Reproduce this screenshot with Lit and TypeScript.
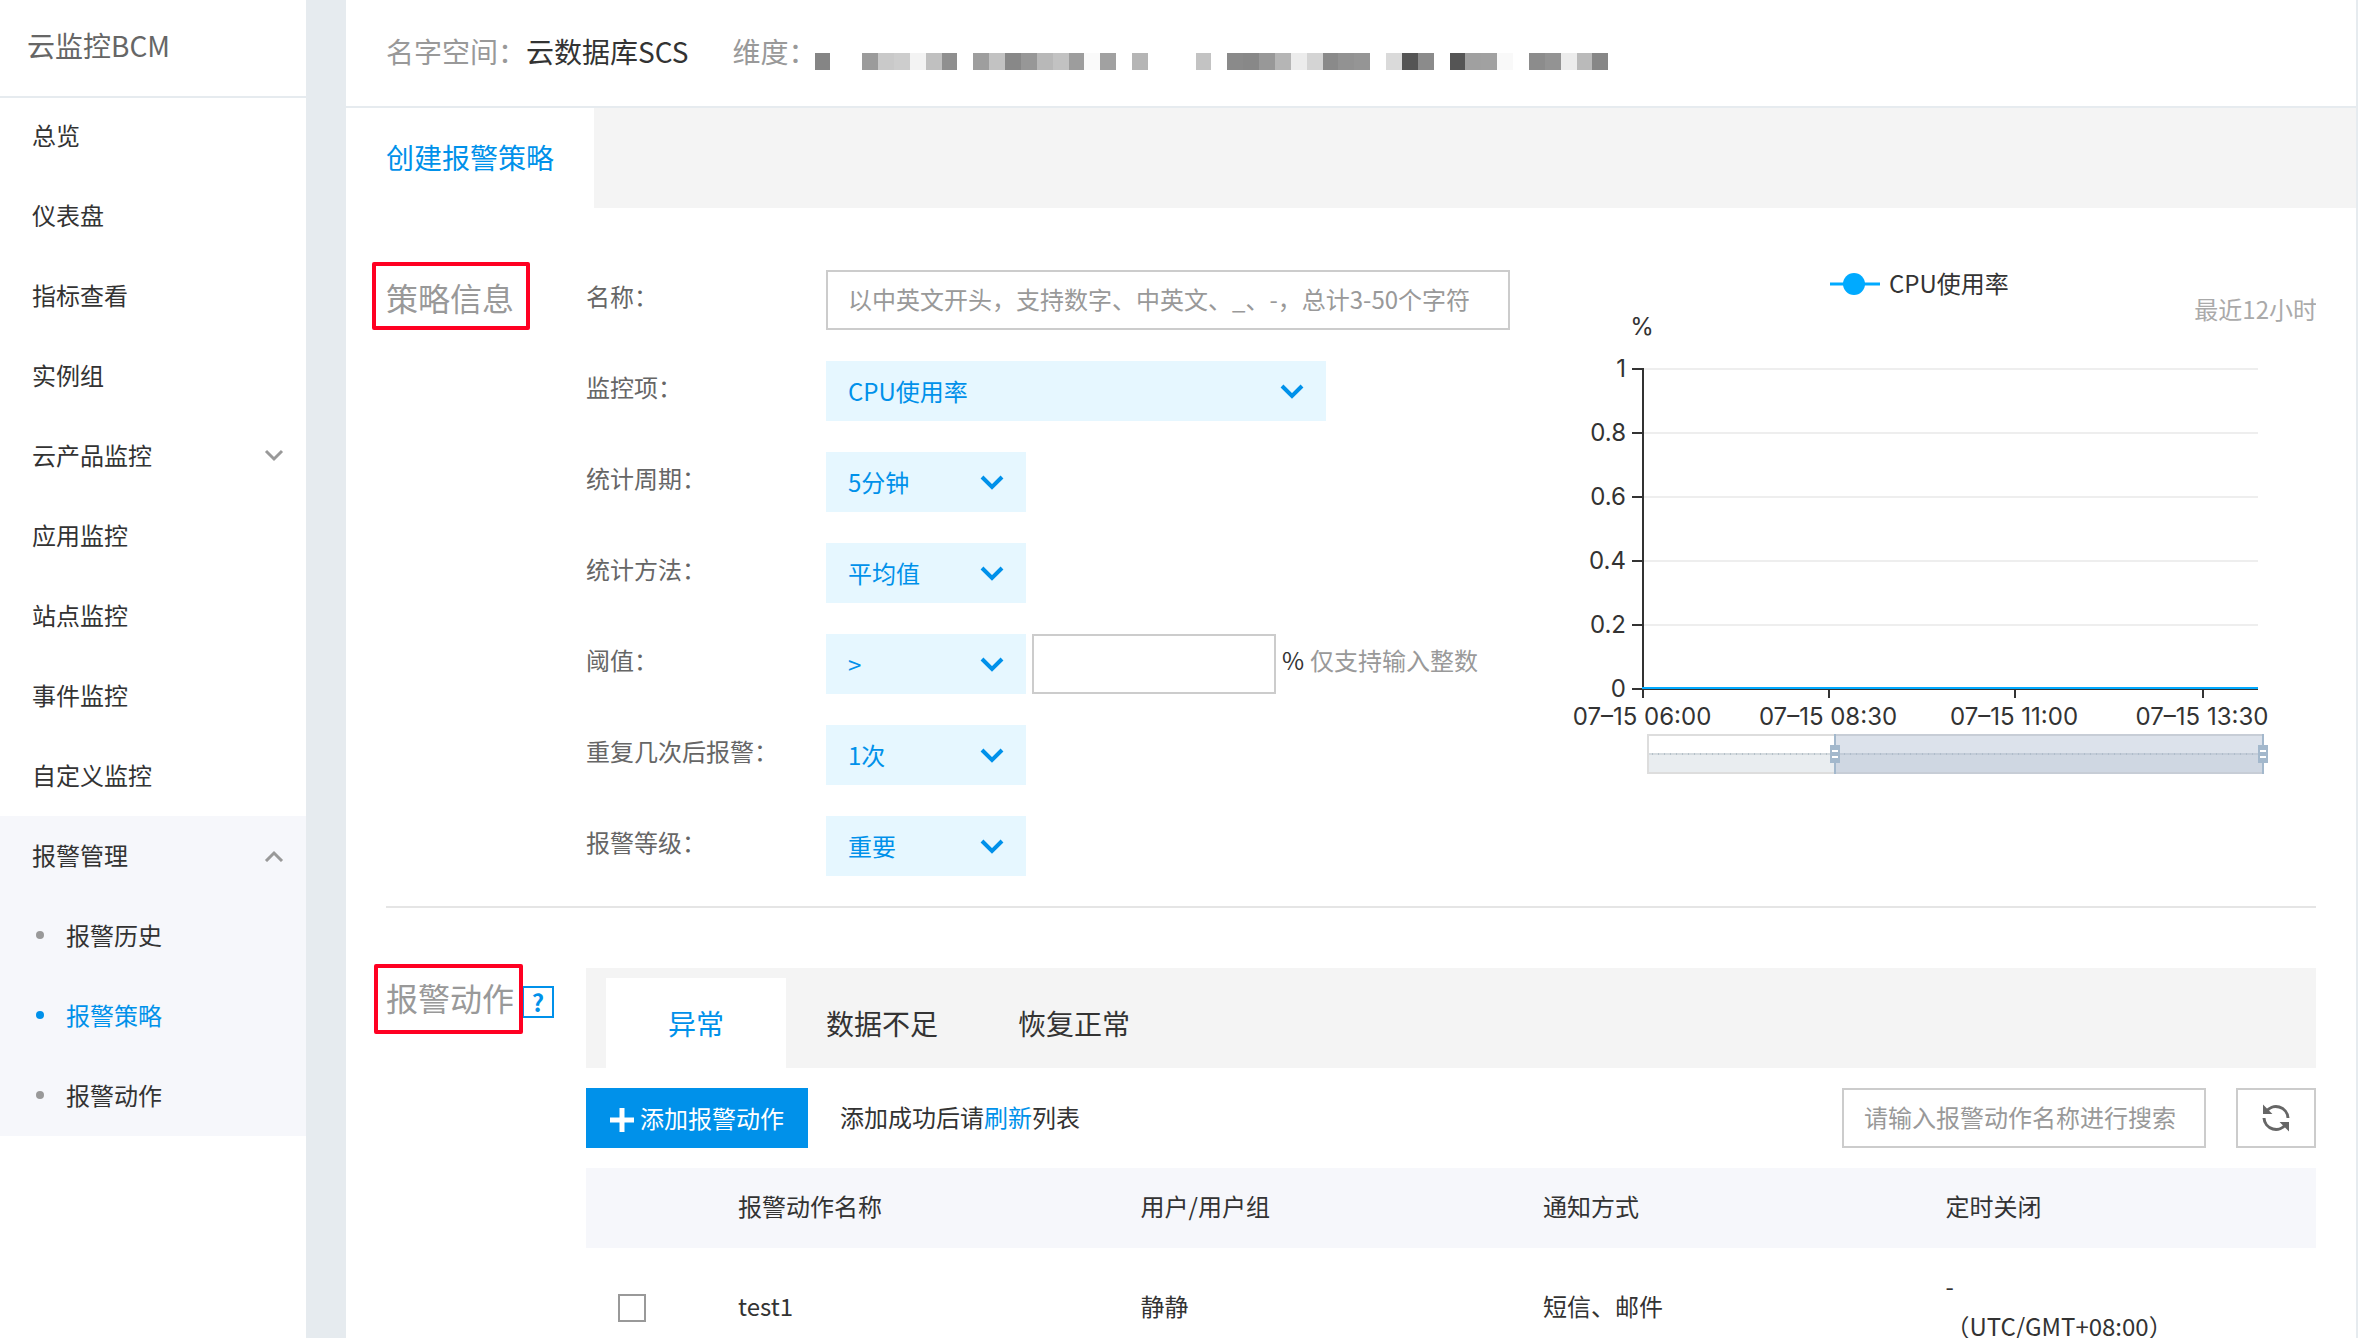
import { LitElement, html, svg, css, nothing } from "lit";
import { customElement, property, state } from "lit/decorators.js";
import { classMap } from "lit/directives/class-map.js";
import { styleMap } from "lit/directives/style-map.js";

interface NavItem {
  label: string;
  expandable?: boolean;
  children?: { label: string; active?: boolean }[];
}

const NAV: NavItem[] = [
  { label: "总览" },
  { label: "仪表盘" },
  { label: "指标查看" },
  { label: "实例组" },
  { label: "云产品监控", expandable: true },
  { label: "应用监控" },
  { label: "站点监控" },
  { label: "事件监控" },
  { label: "自定义监控" },
  {
    label: "报警管理",
    expandable: true,
    children: [{ label: "报警历史" }, { label: "报警策略", active: true }, { label: "报警动作" }],
  },
];

@customElement("side-nav")
export class SideNav extends LitElement {
  static styles = css`
    :host {
      display: block;
      background: #fff;
      color: #333;
    }
    .title {
      height: 96px;
      margin: 0;
      padding: 0 27px;
      border-bottom: 2px solid #e6ebef;
      font-size: 28px;
      line-height: 90px;
      font-weight: 400;
      color: #666;
    }
    .list {
      margin: -2px 0 0;
      padding: 0;
      list-style: none;
    }
    .open {
      background: #f6f7fb;
    }
    .link {
      display: flex;
      box-sizing: border-box;
      align-items: center;
      justify-content: space-between;
      height: 80px;
      padding: 0 22px 3px 32px;
      font-size: 24px;
      color: inherit;
      text-decoration: none;
    }
    .sub {
      margin: 0;
      padding: 0;
      list-style: none;
    }
    .sub .link {
      justify-content: flex-start;
      gap: 22px;
      padding-left: 36px;
    }
    .dot {
      width: 8px;
      height: 8px;
      border-radius: 50%;
      background: #999;
    }
    .active {
      color: #0091ea;
    }
    .active .dot {
      background: #0091ea;
    }
    .arrow {
      display: block;
    }
  `;

  private arrow(up: boolean) {
    return html`<svg class="arrow" width="20" height="14" viewBox="0 0 20 14" aria-hidden="true">
      <path d=${up ? "M2 13L10 5L18 13" : "M2 3L10 11L18 3"} fill="none" stroke="#999" stroke-width="3" />
    </svg>`;
  }

  render() {
    return html`
      <h1 class="title">云监控BCM</h1>
      <ul class="list">
        ${NAV.map(
          (item) => html`<li class=${classMap({ open: !!item.children })}>
            <a class="link" href="#">${item.label}${item.expandable ? this.arrow(!!item.children) : nothing}</a>
            ${item.children
              ? html`<ul class="sub">
                  ${item.children.map(
                    (c) => html`<li>
                      <a class=${classMap({ link: true, active: !!c.active })} href="#"
                        ><span class="dot"></span>${c.label}</a
                      >
                    </li>`
                  )}
                </ul>`
              : nothing}
          </li>`
        )}
      </ul>
    `;
  }
}

/* Grey level of each masked cell; an empty entry leaves a gap. */
const MASK: (string | null)[] = [
  "#858585", null, null, "#9b9b9b", "#c9c9c9", "#cdcdcd", "#f3f3f3", "#c0c0c0", "#8f8f8f", null,
  "#9e9e9e", "#c2c2c2", "#888888", "#979797", "#b8b8b8", "#c2c2c2", "#9d9d9d", "#fafafa", "#a1a1a1", null,
  "#b5b5b5", null, null, null, "#c3c3c3", null, "#8a8a8a", "#888888", "#989898", "#b5b5b5",
  "#ececec", "#d4d4d4", "#8a8a8a", "#929292", "#959595", null, "#dadada", "#555555", "#8b8b8b", null,
  "#555555", "#a0a0a0", "#a1a1a1", "#f9f9f9", null, "#8c8c8c", "#939393", "#ececec", "#bababa", "#878787",
];

@customElement("masked-value")
export class MaskedValue extends LitElement {
  static styles = css`
    :host {
      display: flex;
      width: 794px;
    }
    .cell {
      flex: 1;
      height: 17px;
    }
  `;
  render() {
    return MASK.map((c) => html`<span class="cell" style=${styleMap({ background: c ?? "transparent" })}></span>`);
  }
}

@customElement("field-select")
export class FieldSelect extends LitElement {
  static styles = css`
    :host {
      display: grid;
      width: 200px;
      height: 60px;
      align-items: center;
    }
    :host([wide]) {
      width: 500px;
    }
    .select {
      grid-area: 1 / 1;
      width: 100%;
      height: 60px;
      padding: 0 60px 2px 22px;
      border: 0;
      border-radius: 0;
      appearance: none;
      background: #e6f7ff;
      color: #0091ea;
      font: inherit;
      font-size: 24px;
    }
    .arrow {
      grid-area: 1 / 1;
      justify-self: end;
      margin-right: 22px;
      pointer-events: none;
    }
  `;
  @property() label = "";
  @property() value = "";
  render() {
    return html`
      <select class="select" aria-label=${this.label}>
        <option>${this.value}</option>
      </select>
      <svg class="arrow" width="24" height="16" viewBox="0 0 24 16" aria-hidden="true">
        <path d="M2 3L12 13L22 3" fill="none" stroke="#0091ea" stroke-width="4" />
      </svg>
    `;
  }
}

const Y_TICKS = ["1", "0.8", "0.6", "0.4", "0.2", "0"];
const X_TICKS: [number, string][] = [
  [83, "07–15 06:00"],
  [269, "07–15 08:30"],
  [455, "07–15 11:00"],
  [643, "07–15 13:30"],
];

@customElement("usage-chart")
export class UsageChart extends LitElement {
  static styles = css`
    :host {
      display: block;
    }
    .chart {
      display: block;
    }
    .text {
      font-family: Inter, "Noto Sans CJK SC", sans-serif;
      font-size: 24px;
      fill: #333;
    }
    .muted {
      fill: #aaa;
    }
    .end {
      text-anchor: end;
    }
    .mid {
      text-anchor: middle;
    }
    .cjk {
      font-family: "Noto Sans CJK SC", sans-serif;
    }
  `;
  private handle(x: number) {
    return svg`
      <rect x=${x} y="486" width="2" height="40" fill="#a3b8cc" />
      <rect x=${x - 4} y="497" width="10" height="18" fill="#a3b8cc" />
      <rect x=${x - 2} y="502" width="6" height="2" fill="#fff" />
      <rect x=${x - 2} y="508" width="6" height="2" fill="#fff" />`;
  }
  render() {
    return html`<svg class="chart" width="756" height="540" viewBox="0 0 756 540" role="img" aria-label="CPU使用率">
      <path d="M270 36H320" stroke="#00aaff" stroke-width="3" />
      <circle cx="294" cy="36" r="11" fill="#00aaff" />
      <text class="text cjk" x="329" y="45">CPU使用率</text>
      <text class="text cjk muted end" x="757" y="71">最近12小时</text>
      <text class="text mid" x="82" y="87">%</text>
      ${Y_TICKS.map((t, i) => {
        const y = 121 + i * 64;
        return svg`
          ${i < 5 ? svg`<path d=${`M84 ${y}H698`} stroke="#eee" stroke-width="2" />` : nothing}
          <path d=${`M72 ${y}H83`} stroke="#333" stroke-width="2" />
          <text class="text end" x="66" y=${y + 8}>${t}</text>`;
      })}
      <path d="M83 120V441" stroke="#333" stroke-width="2" />
      <path d="M83 441H698" stroke="#333" stroke-width="2" />
      ${X_TICKS.map(
        ([x, t]) => svg`
          <path d=${`M${x} 441V450`} stroke="#333" stroke-width="2" />
          <text class="text mid" x=${x - 1} y="477">${t}</text>`
      )}
      <path d="M82 440H698" stroke="#00aaff" stroke-width="2" />
      <rect x="88" y="487" width="615" height="38" fill="#fff" stroke="#ddd" stroke-width="2" />
      <rect x="89" y="506" width="613" height="18" fill="#e9edf0" />
      <path d="M89 506H702" stroke="#d5dbdf" stroke-width="2" />
      <path d="M92 506H702" stroke="#b4c0c8" stroke-width="2" stroke-dasharray="1 5" />
      <rect x="275" y="486" width="428" height="40" fill="#a7b7cc" fill-opacity="0.4" />
      ${this.handle(274)} ${this.handle(702)}
    </svg>`;
  }
}

@customElement("app-root")
export class AppRoot extends LitElement {
  static styles = css`
    :host {
      display: grid;
      grid-template-columns: 306px minmax(0, 1fr);
      column-gap: 40px;
      height: 100vh;
      overflow: hidden;
      background: #e6ebef;
      color: #333;
      font-family: "Noto Sans CJK SC", sans-serif;
      font-size: 24px;
    }
    * {
      box-sizing: border-box;
    }
    .main {
      margin-right: 2px;
      overflow-y: auto;
      scrollbar-width: none;
      background: #fff;
    }
    .crumbs {
      display: flex;
      align-items: center;
      height: 108px;
      padding: 0 40px 4px;
      border-bottom: 2px solid #e6ebef;
      font-size: 28px;
      line-height: 40px;
    }
    .key {
      color: #999;
    }
    .value {
      margin-right: 44px;
    }
    .mask {
      margin: 20px 0 0 -2px;
    }
    .page-tabs {
      display: flex;
      height: 100px;
      background: #f4f4f4;
    }
    .page-tab {
      padding: 0 40px;
      width: 248px;
      background: #fff;
      color: #0091ea;
      font-size: 28px;
      line-height: 98px;
      text-decoration: none;
      white-space: nowrap;
    }
    .section {
      display: grid;
      grid-template-columns: 200px minmax(0, 1fr) auto;
      margin: 0 40px;
    }
    .policy {
      padding: 40px 0 30px;
      border-bottom: 2px solid #e5e5e5;
    }
    .actions {
      grid-template-columns: 200px minmax(0, 1fr);
      padding-top: 60px;
    }
    .head {
      display: flex;
      align-items: flex-start;
    }
    .policy .head {
      padding-top: 25px;
    }
    .heading {
      position: relative;
      margin: 0;
      font-size: 32px;
      line-height: 48px;
      font-weight: 400;
      color: #999;
    }
    .actions .heading {
      margin-top: 5px;
    }
    .frame {
      position: absolute;
      inset: -11px -16px -9px -14px;
      border: 4px solid #ff0022;
      border-radius: 2px;
    }
    .actions .frame {
      inset: -9px -9px -13px -12px;
    }
    .help {
      width: 32px;
      height: 32px;
      margin: 18px 0 0 8px;
      padding: 0;
      border: 2px solid #0091ea;
      background: #fff;
      color: #0091ea;
      font: inherit;
      font-size: 24px;
      font-weight: 700;
      line-height: 28px;
    }
    .form {
      display: grid;
      gap: 31px;
      align-content: start;
      padding-top: 22px;
    }
    .row {
      display: grid;
      grid-template-columns: 240px minmax(0, 1fr);
      height: 60px;
    }
    .label,
    .unit,
    .hint {
      line-height: 52px;
    }
    .label {
      color: #666;
    }
    .controls {
      display: flex;
      gap: 6px;
    }
    .hint {
      color: #999;
    }
    .input {
      width: 244px;
      height: 60px;
      padding: 0 20px 3px;
      border: 2px solid #ccc;
      border-radius: 0;
      background: #fff;
      font: inherit;
      color: #333;
    }
    .input::placeholder {
      color: #999;
      opacity: 1;
    }
    .name {
      width: 684px;
    }
    .search {
      width: 364px;
      margin-left: auto;
    }
    .state-tabs {
      display: flex;
      height: 100px;
      padding: 10px 20px 0;
      background: #f4f4f4;
    }
    .state-tab {
      height: 90px;
      padding: 0 40px;
      border: 0;
      background: none;
      color: #333;
      font: inherit;
      font-size: 28px;
    }
    .selected {
      padding: 0 62px;
      background: #fff;
      color: #0091ea;
    }
    .toolbar {
      display: flex;
      height: 60px;
      margin: 20px 0;
      line-height: 58px;
    }
    .add {
      display: flex;
      align-items: center;
      gap: 6px;
      width: 222px;
      padding: 0 24px;
      border: 0;
      background: #0091ea;
      color: #fff;
      font: inherit;
      white-space: nowrap;
    }
    .plus {
      flex: none;
      margin-top: 4px;
    }
    .tip {
      margin-left: 32px;
    }
    .link {
      color: #0091ea;
      text-decoration: none;
    }
    .refresh {
      display: grid;
      place-items: center;
      width: 80px;
      margin-left: 30px;
      padding: 0;
      border: 2px solid #ccc;
      background: #fff;
    }
    .table {
      width: 100%;
      table-layout: fixed;
      border-collapse: collapse;
      line-height: 40px;
    }
    .th,
    .td {
      padding: 18px 32px 22px;
      text-align: left;
      font-weight: 400;
    }
    .th {
      background: #f6f7fb;
    }
    .pick {
      width: 120px;
    }
    .td.pick {
      padding: 20px 32px;
    }
    .check {
      display: block;
      width: 28px;
      height: 28px;
      margin: 0;
      appearance: none;
      border: 2px solid #999;
      background: #fff;
    }
  `;

  @state() private tab = "异常";

  private selectRow(label: string, value: string, wide = false) {
    return html`<div class="row">
      <span class="label">${label}：</span>
      <div class="controls"><field-select label=${label} value=${value} ?wide=${wide}></field-select></div>
    </div>`;
  }

  render() {
    return html`
      <side-nav></side-nav>
      <main class="main">
        <div class="crumbs">
          <span class="key">名字空间：</span><span class="value">云数据库SCS</span> <span class="key">维度：</span
          ><masked-value class="mask"></masked-value>
        </div>
        <nav class="page-tabs"><a class="page-tab" href="#">创建报警策略</a></nav>

        <section class="section policy">
          <div class="head"><h2 class="heading">策略信息<span class="frame"></span></h2></div>
          <form class="form">
            <div class="row">
              <label class="label" for="name">名称：</label>
              <input
                class="input name"
                id="name"
                type="text"
                placeholder="以中英文开头，支持数字、中英文、_、-，总计3-50个字符"
              />
            </div>
            ${this.selectRow("监控项", "CPU使用率", true)} ${this.selectRow("统计周期", "5分钟")}
            ${this.selectRow("统计方法", "平均值")}
            <div class="row">
              <label class="label" for="threshold">阈值：</label>
              <div class="controls">
                <field-select label="比较" value="&gt;"></field-select>
                <input class="input" id="threshold" type="text" />
                <span class="unit">%</span><span class="hint">仅支持输入整数</span>
              </div>
            </div>
            ${this.selectRow("重复几次后报警", "1次")} ${this.selectRow("报警等级", "重要")}
          </form>
          <usage-chart></usage-chart>
        </section>

        <section class="section actions">
          <div class="head">
            <h2 class="heading">报警动作<span class="frame"></span></h2>
            <button class="help" type="button">?</button>
          </div>
          <div>
            <div class="state-tabs" role="tablist">
              ${["异常", "数据不足", "恢复正常"].map(
                (t) => html`<button
                  class=${classMap({ "state-tab": true, selected: t === this.tab })}
                  role="tab"
                  aria-selected=${t === this.tab}
                  @click=${() => (this.tab = t)}
                >
                  ${t}
                </button>`
              )}
            </div>
            <div class="toolbar">
              <button class="add" type="button">
                <svg class="plus" width="24" height="24" viewBox="0 0 24 24" aria-hidden="true">
                  <path d="M12 0V24M0 12H24" stroke="#fff" stroke-width="5" /></svg
                >添加报警动作
              </button>
              <span class="tip">添加成功后请<a class="link" href="#">刷新</a>列表</span>
              <input
                class="input search"
                type="text"
                aria-label="搜索报警动作"
                placeholder="请输入报警动作名称进行搜索"
              />
              <button class="refresh" type="button" aria-label="刷新">
                <svg width="28" height="28" viewBox="0 0 28 28" fill="none" stroke="#666" stroke-width="3">
                  <path d="M26 14A12 12 0 0 0 4 8" />
                  <path d="M2 3V9L8 9Z" fill="#666" stroke-width="2" />
                  <path d="M2 14A12 12 0 0 0 24 20" />
                  <path d="M26 25V19L20 19Z" fill="#666" stroke-width="2" />
                </svg>
              </button>
            </div>
            <table class="table">
              <thead>
                <tr>
                  <th class="th pick"></th>
                  <th class="th">报警动作名称</th>
                  <th class="th">用户/用户组</th>
                  <th class="th">通知方式</th>
                  <th class="th">定时关闭</th>
                </tr>
              </thead>
              <tbody>
                <tr>
                  <td class="td pick"><input class="check" type="checkbox" aria-label="test1" /></td>
                  <td class="td">test1</td>
                  <td class="td">静静</td>
                  <td class="td">短信、邮件</td>
                  <td class="td">-<br />（UTC/GMT+08:00）</td>
                </tr>
              </tbody>
            </table>
          </div>
        </section>
      </main>
    `;
  }
}
